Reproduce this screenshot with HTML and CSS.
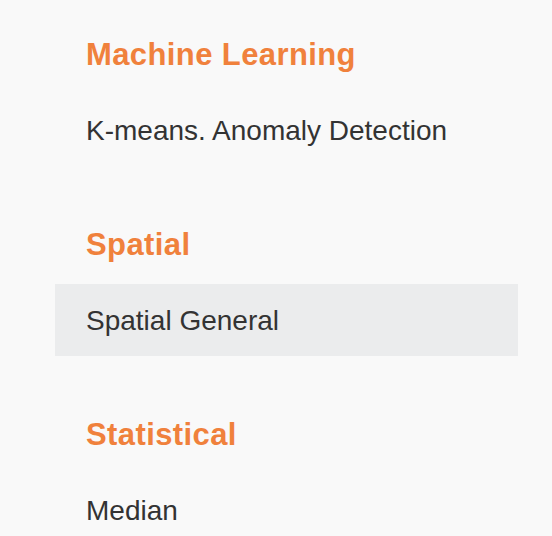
FILE: index.html
```html
<!DOCTYPE html>
<html>
<head>
<meta charset="utf-8">
<link rel="stylesheet" href="styles.css">
</head>
<body>
<nav class="menu">
  <section class="group">
    <h2 class="group-title">Machine Learning</h2>
    <a class="item">K-means. Anomaly Detection</a>
  </section>
  <section class="group">
    <h2 class="group-title">Spatial</h2>
    <a class="item active">Spatial General</a>
  </section>
  <section class="group">
    <h2 class="group-title">Statistical</h2>
    <a class="item">Median</a>
  </section>
</nav>
</body>
</html>
```

FILE: styles.css
```css
html, body {
  margin: 0;
  padding: 0;
  background: #f9f9f9;
}
body {
  font-family: "Liberation Sans", Arial, sans-serif;
  color: #333333;
}
.menu {
  display: flex;
  flex-direction: column;
  width: 463px;
  margin-left: 55px;
  padding-top: 37px;
}
.group {
  display: flex;
  flex-direction: column;
  margin-bottom: 61px;
}
.group-title {
  margin: 0 0 21px 0;
  padding-left: 31px;
  font-size: 31px;
  line-height: 36px;
  letter-spacing: 0.4px;
  font-weight: bold;
  color: #f0813c;
}
.item {
  display: block;
  height: 72px;
  line-height: 73px;
  padding-left: 31px;
  font-size: 28px;
  color: #333333;
}
.item.active {
  background: #ebeced;
}
```
